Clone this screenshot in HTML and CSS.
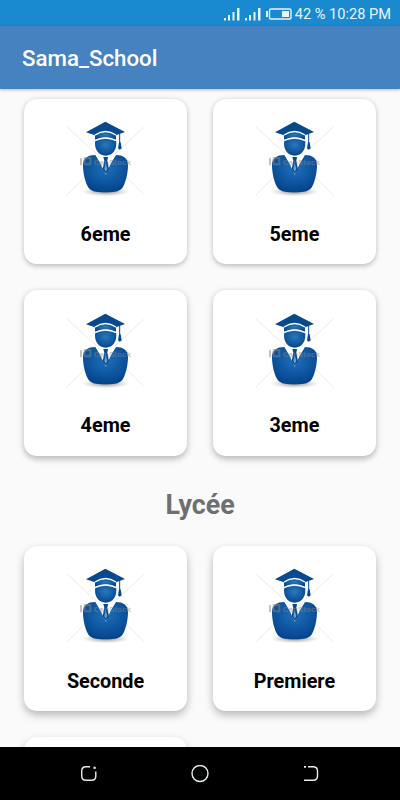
FILE: index.html
```html
<!DOCTYPE html>
<html lang="fr">
<head>
<meta charset="utf-8">
<title>Sama_School</title>
<link rel="stylesheet" href="styles.css">
</head>
<body>
<svg class="defs" aria-hidden="true">
  <defs>
    <radialGradient id="body" cx=".5" cy=".35" r=".65"><stop offset="0" stop-color="#1e70ba"/><stop offset="1" stop-color="#04438c"/></radialGradient>
    <radialGradient id="face" cx=".5" cy=".4" r=".6"><stop offset="0" stop-color="#2878bd"/><stop offset="1" stop-color="#06478f"/></radialGradient>
    <radialGradient id="ground"><stop offset="0" stop-color="#777" stop-opacity=".9"/><stop offset="1" stop-color="#aaa" stop-opacity="0"/></radialGradient>
    <symbol id="graduate" viewBox="0 0 270 270">
      <path d="M20 50L110 132M254 50L165 132M20 256L84 192M254 256L190 192" stroke="#e4e4e4" stroke-width="2.5" fill="none"/>
      <ellipse cx="137" cy="245" rx="72" ry="14" fill="url(#ground)"/>
      <path d="M106 135C83 135 69 145 69 165C69 188 75 213 83 229C90 244 105 247 136 247C168 247 183 244 190 229C198 213 204 188 204 165C204 145 190 135 168 135L137 184Z" fill="url(#body)"/>
      <path d="M106 132L122 161L137 194L152 161L168 132Z" fill="#fff"/>
      <path d="M130 141H144L142 152L147 178L137 192L128 178L133 152Z" fill="#07488f"/>
      <path d="M137 158L142 177L137 185L133 177Z" fill="#6aa0d0"/>
      <path d="M106 90Q137 75 168 90C173 118 158 137 137 137C116 137 101 118 106 90Z" fill="url(#face)"/>
      <path d="M78 67L136 35L195 66L168 76Q137 54 105 76Z" fill="#07488f"/>
      <path d="M105 76Q137 54 168 76V90Q137 74 105 90Z" fill="url(#face)"/>
      <path d="M105 75Q137 54 168 75M104 92Q137 76 169 92" fill="none" stroke="#fff" stroke-width="4"/>
      <path d="M179 70V99" stroke="#07488f" stroke-width="3"/>
      <path d="M177 97H182L185 115L179 119L174 115Z" fill="#07488f"/>
      <g opacity=".5" fill="#888">
        <path d="M60 144H66V166H60ZM71 141H94V166H71ZM77 148V160H88V148Z" fill-rule="evenodd"/>
        <text class="watermark" x="101" y="165" textLength="112" lengthAdjust="spacingAndGlyphs">CanStock</text>
      </g>
    </symbol>
  </defs>
</svg>
<div class="screen">
  <div class="status">
    <svg class="signals" width="70" height="16" viewBox="0 0 70 16">
      <g fill="#e6f4fd">
        <path id="bars" d="M1 12h2v2.500h-2zM5 9h2v5.500h-2zM9.500 6h2v8.500h-2zM14 2h2.500v12.500h-2.500z"/>
        <use href="#bars" x="21"/>
        <path d="M43 5h2v6h-2zM59 5h7v6h-7z"/>
      </g>
      <rect x="46.500" y="3" width="21.500" height="10" rx="1.500" fill="none" stroke="#e6f4fd" stroke-width="1.400"/>
    </svg>
    <span>42 % 10:28 PM</span>
  </div>
  <header class="appbar">Sama_School</header>
  <main class="content">
    <div class="grid">
      <div class="card s1"><svg class="icon"><use href="#graduate"/></svg><div class="label">6eme</div></div>
      <div class="card s1"><svg class="icon"><use href="#graduate"/></svg><div class="label">5eme</div></div>
      <div class="card s2"><svg class="icon"><use href="#graduate"/></svg><div class="label">4eme</div></div>
      <div class="card s2"><svg class="icon"><use href="#graduate"/></svg><div class="label">3eme</div></div>
    </div>
    <h2 class="section">Lycée</h2>
    <div class="grid">
      <div class="card s3"><svg class="icon"><use href="#graduate"/></svg><div class="label">Seconde</div></div>
      <div class="card s3"><svg class="icon"><use href="#graduate"/></svg><div class="label">Premiere</div></div>
      <div class="card s3"></div>
    </div>
  </main>
  <nav class="navbar">
    <svg width="18" height="18" viewBox="0 0 18 18"><path d="M10 1.700H6Q1.700 1.700 1.700 6V11Q1.700 15.300 6 15.300H11.500Q15.800 15.300 15.800 11V6.500"/><path class="dot" d="M13.500 1.700h2.200v2.200h-2.200z"/></svg>
    <svg width="18" height="18" viewBox="0 0 18 18"><circle cx="9" cy="8.500" r="8"/></svg>
    <svg width="18" height="18" viewBox="0 0 18 18"><path d="M6 1.700H11Q15.500 1.700 15.500 6V11Q15.500 15.300 11 15.300H2"/><path class="dot" d="M2 1h2v1.800h-2z"/></svg>
  </nav>
</div>
</body>
</html>
```
FILE: styles.css
```css
* { box-sizing: border-box; }
body {
  margin: 0;
  font-family: Roboto, "Liberation Sans", sans-serif;
  background: #fafafa;
}
.defs { display: block; width: 0; height: 0; }
.screen {
  width: 400px;
  height: 800px;
  display: flex;
  flex-direction: column;
  overflow: hidden;
}
.status {
  flex: none;
  height: 26px;
  background: #1989d0;
  color: #e9f5fd;
  display: flex;
  justify-content: flex-end;
  align-items: center;
  padding: 1px 9px 0 0;
  font-size: 14.600px;
  white-space: pre;
}
.signals { margin-right: 2px; }
.appbar {
  flex: none;
  height: 63px;
  padding: 0 22px;
  background: #4682c0;
  color: #fff;
  font-size: 22.300px;
  font-weight: 500;
  line-height: 64px;
  box-shadow: 0 1px 3px rgba(0, 0, 0, .25);
  z-index: 1;
}
.content {
  flex: 1;
  min-height: 0;
  overflow: hidden;
  padding: 9.5px 24px 0 24.300px;
}
.grid {
  display: grid;
  grid-template-columns: 162.500px 162.500px;
  column-gap: 26.400px;
  row-gap: 26px;
}
.card {
  height: 165.800px;
  border-radius: 13px;
  background: #fff;
  padding-top: 11.500px;
  display: flex;
  flex-direction: column;
  align-items: center;
}
.s1 { box-shadow: 0 1.5px 5px rgba(0, 0, 0, .25); }
.s2 { box-shadow: 0 2.5px 6px rgba(0, 0, 0, .27); }
.s3 { box-shadow: 0 4px 8px rgba(0, 0, 0, .27); }
.icon { width: 90px; height: 90px; margin-right: 1px; flex: none; }
.watermark { font-family: "Liberation Sans", sans-serif; font-size: 23px; font-weight: 700; }
.label {
  margin-top: 21.700px;
  color: #000;
  font-size: 19.800px;
  line-height: 26px;
  font-weight: 700;
}
.section {
  margin: 0;
  height: 89.500px;
  padding-top: 30.500px;
  font-size: 26.800px;
  line-height: 36px;
  font-weight: 700;
  color: #6f6f6f;
  text-align: center;
}
.navbar {
  flex: none;
  height: 53px;
  background: #000;
  display: flex;
  justify-content: space-between;
  align-items: center;
  padding: 0 80px;
}
.navbar svg { fill: none; stroke: #e8eeee; stroke-width: 1.400; }
.navbar .dot { fill: #e8eeee; stroke: none; }
```
